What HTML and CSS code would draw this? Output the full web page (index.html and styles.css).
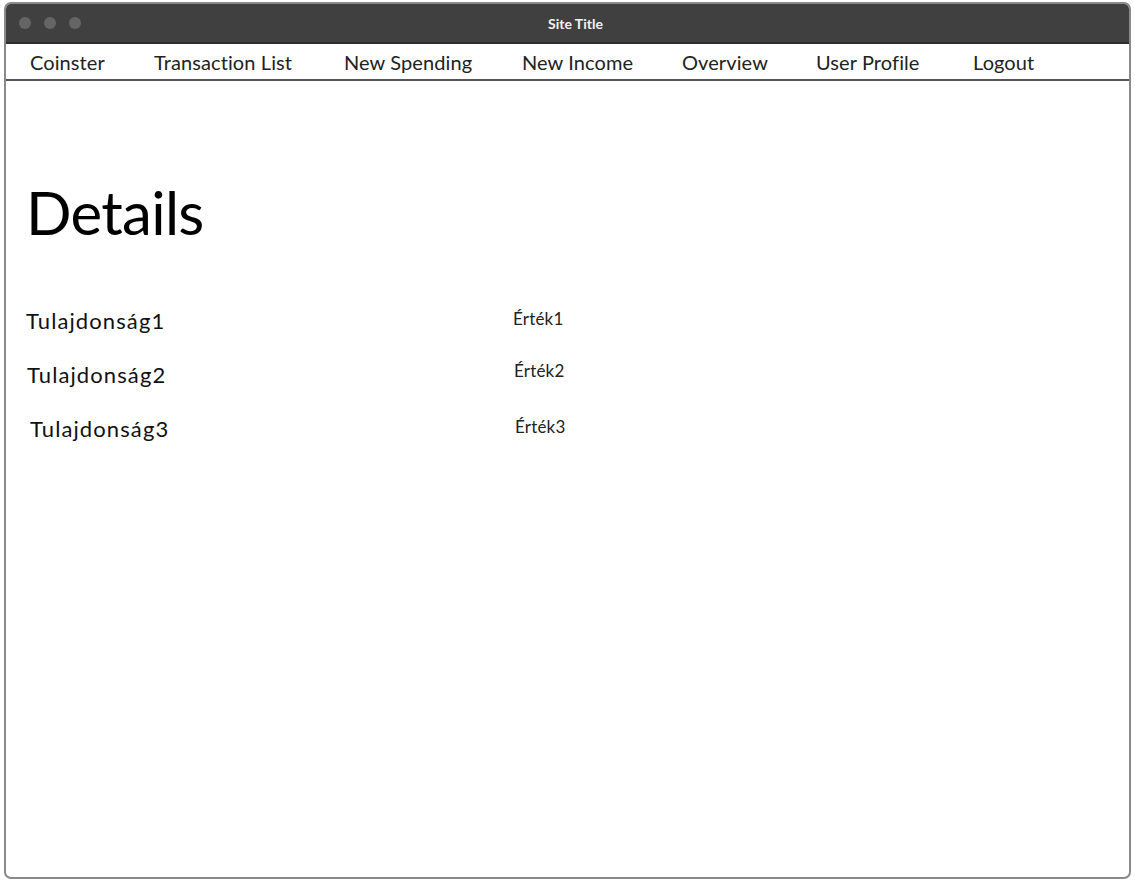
FILE: index.html
```html
<!DOCTYPE html>
<html lang="hu">
<head>
<meta charset="utf-8">
<title>Site Title</title>
<link rel="stylesheet" href="styles.css">
</head>
<body>
<div class="window">
  <div class="titlebar">
    <div class="dots"><span class="dot"></span><span class="dot"></span><span class="dot"></span></div>
    <div class="title">Site Title</div>
  </div>
  <nav class="nav">
    <span class="nav-item">Coinster</span>
    <span class="nav-item">Transaction List</span>
    <span class="nav-item">New Spending</span>
    <span class="nav-item">New Income</span>
    <span class="nav-item">Overview</span>
    <span class="nav-item">User Profile</span>
    <span class="nav-item">Logout</span>
  </nav>
  <main class="content">
    <h1 class="heading">Details</h1>
    <div class="details">
      <div class="row row1"><span class="prop">Tulajdonság1</span><span class="val">Érték1</span></div>
      <div class="row row2"><span class="prop">Tulajdonság2</span><span class="val">Érték2</span></div>
      <div class="row row3"><span class="prop">Tulajdonság3</span><span class="val">Érték3</span></div>
    </div>
  </main>
</div>
</body>
</html>
```
FILE: styles.css
```css
* { box-sizing: border-box; }
html, body { margin: 0; padding: 0; background: #ffffff; }
body {
  font-family: "Source Sans Pro", "Lato", "Open Sans", sans-serif;
  color: #111;
  width: 1135px;
  height: 886px;
  padding: 2px 5px 7px 4px;
}
.window {
  width: 1127px;
  height: 877px;
  border: 2px solid #8a8a8a;
  border-radius: 7px;
  overflow: hidden;
  display: flex;
  flex-direction: column;
  background: #fff;
}
.titlebar {
  height: 38px;
  background: #404040;
  position: relative;
  display: flex;
  align-items: center;
  justify-content: center;
  flex-shrink: 0;
}
.dots {
  position: absolute;
  left: 13px;
  top: 13px;
  display: flex;
  gap: 13px;
}
.dot {
  width: 12px;
  height: 12px;
  border-radius: 50%;
  background: #656565;
}
.title {
  color: #f2f2f2;
  font-family: "Lato", "Open Sans", sans-serif;
  font-weight: 700;
  font-size: 14px;
  margin-left: 16px;
  margin-top: 0;
}
.nav {
  height: 39px;
  border-top: 2px solid #2e2e2e;
  border-bottom: 2px solid #555;
  display: grid;
  grid-template-columns: 124px 190px 178px 160px 134px 157px 1fr;
  align-items: center;
  padding-left: 24px;
  flex-shrink: 0;
}
.nav-item {
  font-size: 20px;
  letter-spacing: 0.1px;
  color: #222;
  white-space: nowrap;
  line-height: 1;
  padding-top: 1px;
}
.content {
  padding: 96px 0 0 20px;
}
.heading {
  margin: 0;
  font-weight: 400;
  font-size: 60px;
  line-height: 70px;
  color: #000;
  letter-spacing: -0.7px;
}
.details {
  margin-top: 60px;
  display: flex;
  flex-direction: column;
}
.row {
  display: grid;
  grid-template-columns: 487px 1fr;
  align-items: start;
  height: 54px;
}
.prop {
  font-size: 22px;
  letter-spacing: 1.1px;
  color: #111;
  line-height: 28px;
}
.val {
  font-size: 17px;
  letter-spacing: 0.2px;
  color: #222;
  line-height: 22px;
  margin-top: 1px;
}
.row2 .prop { padding-left: 1px; }
.row2 .val { padding-left: 1px; margin-top: -1px; }
.row3 .prop { padding-left: 4px; }
.row3 .val { padding-left: 2px; }
```
